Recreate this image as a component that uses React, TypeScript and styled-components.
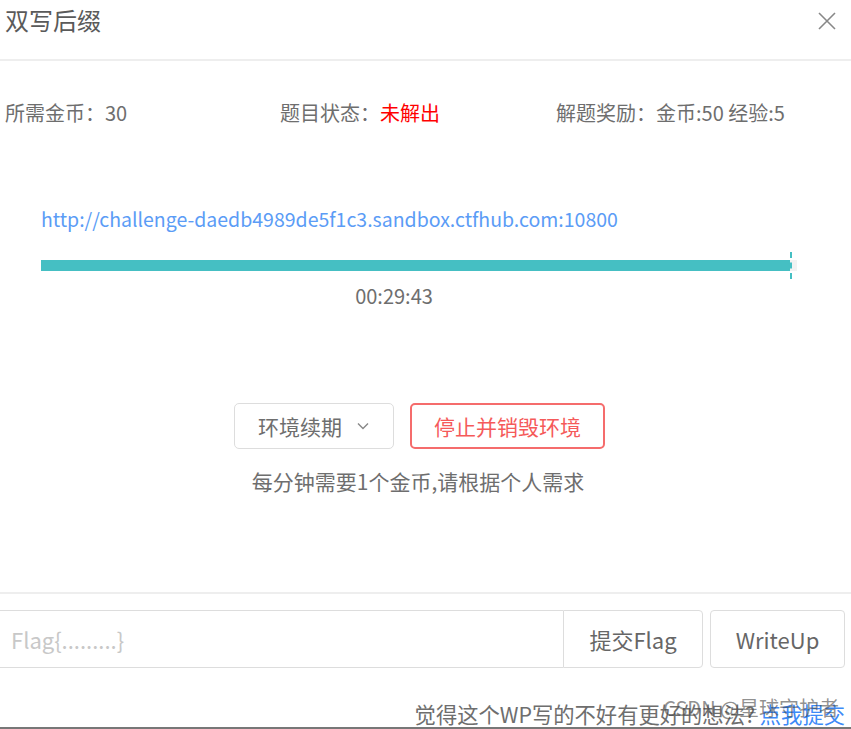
import React from 'react';
import styled, { createGlobalStyle } from 'styled-components';

const GlobalStyle = createGlobalStyle`
  html, body {
    margin: 0;
    padding: 0;
    background: #fff;
  }
  body {
    font-family: "Noto Sans CJK SC", "Noto Sans", sans-serif;
    color: #6e6e6e;
  }
`;

const ChallengeDialog: React.FC = () => {
  return (
    <>
      <GlobalStyle />
      <DialogContainer>
        <DialogHeader>
          <DialogTitle>双写后缀</DialogTitle>
          <CloseButton aria-label="close">
            <svg width="18" height="18" viewBox="0 0 18 18">
              <path d="M1 1 L17 17 M17 1 L1 17" stroke="#888" strokeWidth="1.6" fill="none" />
            </svg>
          </CloseButton>
        </DialogHeader>

        <DialogBody>
          <InfoRow>
            <InfoItem>所需金币：30</InfoItem>
            <InfoItem>
              题目状态：<StatusText>未解出</StatusText>
            </InfoItem>
            <InfoItem>解题奖励：金币:50 经验:5</InfoItem>
          </InfoRow>

          <EnvSection>
            <EnvLink href="#">http://challenge-daedb4989de5f1c3.sandbox.ctfhub.com:10800</EnvLink>
            <ProgressTrack>
              <ProgressFill style={{ width: `${(749 / 756) * 100}%` }} />
              <ProgressTick />
            </ProgressTrack>
            <TimeLeft>00:29:43</TimeLeft>
          </EnvSection>

          <ActionRow>
            <RenewButton>
              环境续期
              <svg width="14" height="14" viewBox="0 0 14 14">
                <path d="M2 4.5 L7 9.5 L12 4.5" stroke="#888" strokeWidth="1.4" fill="none" />
              </svg>
            </RenewButton>
            <DestroyButton>停止并销毁环境</DestroyButton>
          </ActionRow>
          <Notice>每分钟需要1个金币,请根据个人需求</Notice>
        </DialogBody>

        <DialogFooter>
          <FlagRow>
            <InputGroup>
              <FlagInput placeholder="Flag{.........}" />
              <SubmitButton>提交Flag</SubmitButton>
            </InputGroup>
            <WriteUpButton>WriteUp</WriteUpButton>
          </FlagRow>
          <FeedbackLine>
            觉得这个WP写的不好有更好的想法? <FeedbackLink>点我提交</FeedbackLink>
            <Watermark>CSDN @星球守护者</Watermark>
          </FeedbackLine>
        </DialogFooter>
      </DialogContainer>
    </>
  );
};

const DialogContainer = styled.div`
  display: flex;
  flex-direction: column;
  width: 851px;
  height: 729px;
  overflow: hidden;
  box-sizing: border-box;
  border-bottom: 2px solid #777;
`;

const DialogHeader = styled.div`
  display: flex;
  align-items: flex-start;
  justify-content: space-between;
  height: 61px;
  padding: 3px 15px 0 5px;
  box-sizing: border-box;
  border-bottom: 2px solid #eee;
`;

const DialogTitle = styled.div`
  font-size: 24px;
  line-height: 34px;
  color: #5a5a5a;
`;

const CloseButton = styled.button`
  margin-top: 9px;
  padding: 0;
  border: 0;
  background: none;
  line-height: 0;
  cursor: pointer;
`;

const DialogBody = styled.div`
  display: flex;
  flex-direction: column;
  height: 533px;
  box-sizing: border-box;
  border-bottom: 2px solid #eee;
`;

const InfoRow = styled.div`
  display: grid;
  grid-template-columns: 275px 276px 1fr;
  padding: 37px 0 0 5px;
  font-size: 20px;
  line-height: 30px;
`;

const InfoItem = styled.div`
  white-space: nowrap;
`;

const StatusText = styled.span`
  color: #f00;
`;

const EnvSection = styled.div`
  display: flex;
  flex-direction: column;
  padding: 76px 54px 0 41px;
`;

const EnvLink = styled.a`
  font-size: 19.5px;
  line-height: 30px;
  color: #5b9cf6;
  text-decoration: none;
  white-space: nowrap;
`;

const ProgressTrack = styled.div`
  position: relative;
  margin-top: 26px;
  height: 11px;
  background: #f2f2f2;
`;

const ProgressFill = styled.div`
  height: 100%;
  background: #45bfc3;
`;

const ProgressTick = styled.div`
  position: absolute;
  left: 749px;
  top: -8px;
  height: 27px;
  border-left: 2px dashed #45bfc3;
`;

const TimeLeft = styled.div`
  margin-top: 12px;
  padding-right: 50px;
  text-align: center;
  font-size: 20px;
  line-height: 26px;
`;

const ActionRow = styled.div`
  display: flex;
  justify-content: center;
  gap: 16px;
  margin-top: 94px;
  padding-right: 12px;
`;

const BaseButton = styled.button`
  display: flex;
  align-items: center;
  justify-content: center;
  height: 46px;
  box-sizing: border-box;
  border-radius: 5px;
  background: #fff;
  font-family: inherit;
  font-size: 21px;
  cursor: pointer;
`;

const RenewButton = styled(BaseButton)`
  width: 160px;
  gap: 14px;
  border: 1px solid #ddd;
  color: #6e6e6e;
`;

const DestroyButton = styled(BaseButton)`
  width: 195px;
  border: 2px solid #f56c6c;
  color: #f55a5a;
`;

const Notice = styled.div`
  margin-top: 17px;
  padding-right: 15px;
  text-align: center;
  font-size: 21px;
  line-height: 30px;
`;

const DialogFooter = styled.div`
  display: flex;
  flex-direction: column;
  flex: 1;
`;

const FlagRow = styled.div`
  display: flex;
  gap: 7px;
  margin-top: 16px;
  padding-right: 6px;
`;

const InputGroup = styled.div`
  display: flex;
  height: 58px;
  margin-left: -4px;
`;

const FlagInput = styled.input`
  width: 567px;
  box-sizing: border-box;
  border: 1px solid #ddd;
  border-right: 0;
  border-radius: 4px 0 0 4px;
  padding: 0 14px;
  font-family: inherit;
  font-size: 22px;
  color: #666;
  outline: none;

  &::placeholder {
    color: #c8c8c8;
  }
`;

const SubmitButton = styled.button`
  width: 140px;
  border: 1px solid #ddd;
  border-radius: 0 4px 4px 0;
  background: #fff;
  font-family: inherit;
  font-size: 22px;
  color: #666;
`;

const WriteUpButton = styled.button`
  width: 135px;
  height: 58px;
  border: 1px solid #ddd;
  border-radius: 4px;
  background: #fff;
  font-family: inherit;
  font-size: 22px;
  color: #666;
`;

const FeedbackLine = styled.div`
  position: relative;
  margin-top: auto;
  padding-right: 6px;
  text-align: right;
  font-size: 21.3px;
  line-height: 26px;
  white-space: nowrap;
`;

const FeedbackLink = styled.span`
  color: #3d8af7;
`;

const Watermark = styled.span`
  position: absolute;
  right: 12px;
  top: -6px;
  font-size: 20px;
  color: rgba(70, 70, 70, 0.6);
`;

export default ChallengeDialog;
